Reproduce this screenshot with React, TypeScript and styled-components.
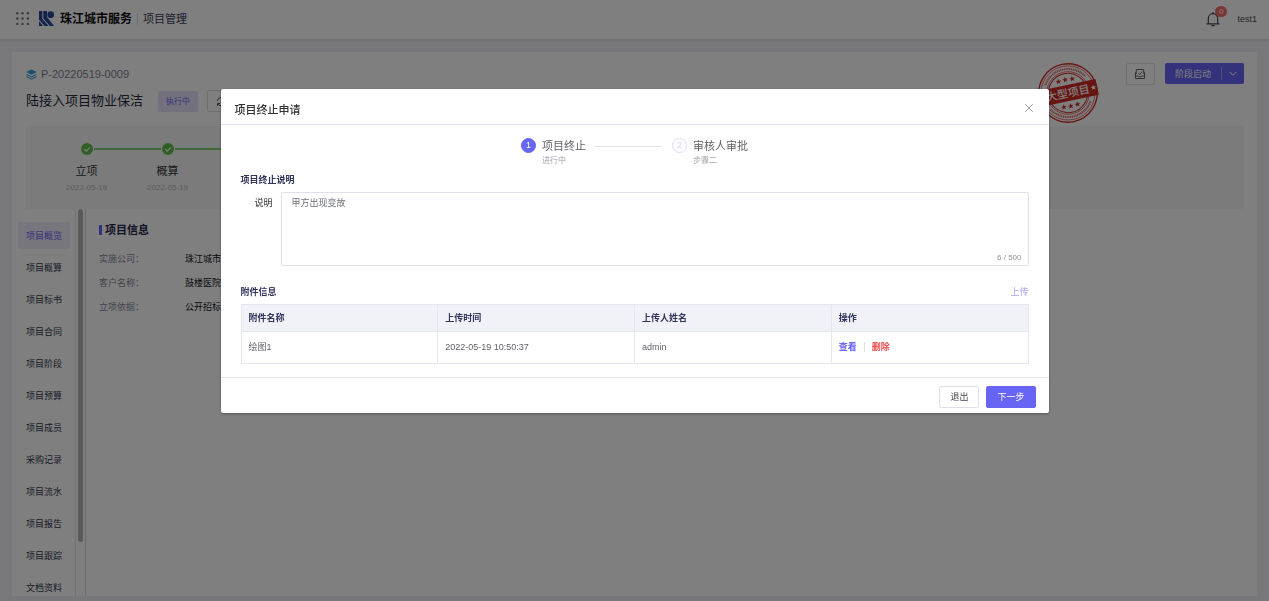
import React from "react";
import styled, { createGlobalStyle } from "styled-components";

const GlobalStyle = createGlobalStyle`
  *, *::before, *::after { box-sizing: border-box; }
  html, body, #root { height: 100%; }
  body {
    margin: 0;
    overflow: hidden;
    background: #f0f0f5;
    color: #303133;
    font-family: "Liberation Sans", "Noto Sans CJK SC", sans-serif;
    font-size: 9px;
    line-height: 14px;
  }
  button, textarea { font: inherit; }
  h1, h2, h3, p, ul, ol, dl, dd { margin: 0; padding: 0; }
  ul, ol { list-style: none; }
  a { color: inherit; text-decoration: none; }
  svg { display: block; flex: none; }
`;

const purple = "#6864f4";
const green = "#62c04c";

const Page = styled.div`
  display: flex;
  flex-direction: column;
  height: 100vh;
`;

const TopBar = styled.header`
  display: flex;
  align-items: center;
  height: 39px;
  flex: none;
  padding: 0 12px 2px 16px;
  background: #fff;
  box-shadow: 0 1px 3px rgba(0, 0, 0, 0.1);
`;

const Brand = styled.h1`
  margin-left: 6px;
  font-size: 12px;
  line-height: 18px;
  font-weight: 700;
  color: #0c0c10;
`;

const AppName = styled.span`
  margin-left: 5px;
  padding-left: 5px;
  border-left: 1px solid #dcdce4;
  font-size: 11px;
  line-height: 12px;
  color: #3c3e58;
`;

const BellButton = styled.button`
  position: relative;
  margin-left: auto;
  padding: 0;
  border: 0;
  background: none;
  color: #44464e;
`;

const Badge = styled.span`
  position: absolute;
  top: -5px;
  right: -7px;
  width: 12px;
  height: 11px;
  border-radius: 6px;
  background: #f56c6c;
  color: #fff;
  font-size: 8px;
  line-height: 11px;
  text-align: center;
`;

const UserName = styled.span`
  margin-left: 17px;
  color: #4a4c56;
`;

const Panel = styled.main`
  position: relative;
  display: flex;
  flex-direction: column;
  flex: 1;
  min-height: 0;
  margin: 13px 12px 5px;
  background: #fff;
`;

const ProjectHead = styled.div`
  display: flex;
  justify-content: space-between;
  padding: 11px 13px 0 14px;
`;

const CodeLine = styled.p`
  display: flex;
  align-items: center;
  gap: 4px;
  height: 22px;
  font-size: 11px;
  color: #7c7e94;
`;

const TitleLine = styled.div`
  display: flex;
  align-items: center;
  height: 22px;
  margin-top: 5px;
`;

const ProjectName = styled.h2`
  margin-right: 15px;
  font-size: 13px;
  line-height: 20px;
  font-weight: 400;
  color: #26283a;
`;

const Tag = styled.span`
  padding: 4px 8px 3px;
  border-radius: 2px;
  background: #e6e3fb;
  color: ${purple};
  font-size: 8px;
`;

const IconButton = styled.button`
  display: flex;
  align-items: center;
  justify-content: center;
  width: 29px;
  height: 22px;
  padding: 0;
  border: 1px solid #dcdfe6;
  border-radius: 2px;
  background: #fff;
  color: #55575f;
`;

const RefreshButton = styled(IconButton)`
  margin-left: 9px;
`;

const HeadActions = styled.div`
  display: flex;
  gap: 10px;
  align-items: flex-start;
`;

const SplitButton = styled.div`
  display: flex;
  align-items: center;
  height: 21px;
  border-radius: 2px;
  background: ${purple};
`;

const SplitPart = styled.button`
  display: flex;
  align-items: center;
  height: 13px;
  padding: 0 10px;
  border: 0;
  background: none;
  color: #fff;
`;

const SplitArrow = styled(SplitPart)`
  padding: 0 7px;
  border-left: 1px solid #9c99f8;
`;

const Stamp = styled.svg`
  position: absolute;
  top: 10px;
  right: 158px;
`;

const Stages = styled.ol`
  display: flex;
  height: 83px;
  margin: 14px 13px 0 14px;
  padding: 17px 20px 0;
  background: #f7f7f8;
`;

const StageTrack = styled.div<{ $first?: boolean }>`
  display: grid;
  grid-template-columns: 1fr 12px 1fr;
  align-items: center;
  gap: 1px;
  width: 100%;
  &::before, &::after {
    content: "";
    height: 2px;
    background: #7dcf6b;
  }
  &::before { visibility: ${(p) => (p.$first ? "hidden" : "visible")}; }
`;

const Stage = styled.li`
  display: flex;
  flex-direction: column;
  align-items: center;
  width: 81px;
  &:last-child ${StageTrack}::after { margin-right: -34px; }
`;

const StageName = styled.span`
  margin-top: 8px;
  font-size: 11px;
  line-height: 16px;
  color: #303133;
`;

const StageDate = styled.time`
  margin-top: 2px;
  font-size: 8px;
  color: #b4b6bc;
`;

const Body = styled.div`
  display: flex;
  flex: 1;
  min-height: 0;
`;

const SideNav = styled.nav`
  width: 64px;
  flex: none;
  padding: 13px 5px 0 6px;
  overflow: hidden;
  border-right: 1px solid #e2e2e6;
`;

const NavItem = styled.a<{ $active?: boolean }>`
  display: block;
  height: 27px;
  margin-bottom: 5px;
  padding: 1px 0 0 8px;
  line-height: 27px;
  background: ${(p) => (p.$active ? "#eeedfb" : "transparent")};
  color: ${(p) => (p.$active ? purple : "#34364e")};
`;

const ScrollTrack = styled.div`
  width: 10px;
  flex: none;
  padding: 0 2px;
  border-right: 1px solid #d6d6da;
`;

const ScrollThumb = styled.div`
  height: 86%;
  border-radius: 3px;
  background: #b4b4b6;
`;

const Info = styled.section`
  padding: 13px 13px 0;
`;

const InfoTitle = styled.h3`
  display: flex;
  align-items: center;
  gap: 3px;
  margin-bottom: 14px;
  font-size: 11px;
  line-height: 16px;
  color: #24274a;
  &::before {
    content: "";
    width: 3px;
    height: 10px;
    background: ${purple};
  }
`;

const InfoList = styled.dl`
  display: grid;
  grid-template-columns: 86px auto;
  row-gap: 10px;
  & dt { color: #85879a; }
  & dd { color: #101014; }
`;

const Overlay = styled.div`
  position: fixed;
  inset: 0;
  background: rgba(0, 0, 0, 0.5);
`;

const Dialog = styled.section`
  width: 828px;
  max-width: calc(100% - 32px);
  margin: 89px auto 0;
  border-radius: 2px;
  background: #fff;
  box-shadow: 0 1px 3px rgba(0, 0, 0, 0.3);
`;

const DialogHead = styled.div`
  display: flex;
  align-items: center;
  justify-content: space-between;
  height: 36px;
  padding: 6px 15px 0 14px;
  border-bottom: 1px solid #e4e5ec;
`;

const DialogTitle = styled.h2`
  font-size: 11px;
  line-height: 16px;
  font-weight: 500;
  color: #303133;
`;

const CloseButton = styled.button`
  display: flex;
  padding: 0 0 4px;
  border: 0;
  background: none;
  color: #909399;
`;

const DialogBody = styled.div`
  padding: 13px 20px;
`;

const Steps = styled.ol`
  display: flex;
  justify-content: center;
  align-items: flex-start;
`;

const Step = styled.li`
  display: flex;
  gap: 6px;
`;

const StepLine = styled.li`
  width: 66px;
  height: 1px;
  margin: 8px 11px 0 9px;
  background: #e2e3e8;
`;

const StepMark = styled.span<{ $current?: boolean }>`
  width: 15px;
  height: 15px;
  border-radius: 50%;
  border: 1px solid ${(p) => (p.$current ? purple : "#dddbf6")};
  background: ${(p) => (p.$current ? purple : "#fff")};
  color: ${(p) => (p.$current ? "#fff" : "#d3d1f2")};
  line-height: 13px;
  text-align: center;
`;

const StepName = styled.p`
  font-size: 11px;
  line-height: 17px;
  color: #606266;
`;

const StepNote = styled.p`
  font-size: 8px;
  line-height: 12px;
  color: #a0a3aa;
`;

const SectionTitle = styled.h3`
  font-size: 9px;
  line-height: 14px;
  font-weight: 700;
  color: #30335a;
`;

const StepsTitle = styled(SectionTitle)`
  margin-top: 6px;
`;

const Field = styled.div`
  display: flex;
  margin-top: 5px;
`;

const FieldLabel = styled.label`
  width: 40px;
  flex: none;
  padding: 4px 8px 0 0;
  text-align: right;
  color: #303133;
`;

const TextBox = styled.div`
  position: relative;
  flex: 1;
  height: 74px;
`;

const TextArea = styled.textarea`
  display: block;
  width: 100%;
  height: 100%;
  padding: 3px 10px;
  border: 1px solid #dfe0e8;
  border-radius: 2px;
  outline: 0;
  resize: none;
  background: #fff;
  color: #707276;
  line-height: 14px;
`;

const Counter = styled.span`
  position: absolute;
  right: 7px;
  bottom: 1px;
  font-size: 8px;
  color: #909399;
`;

const FilesHead = styled.div`
  display: flex;
  align-items: center;
  justify-content: space-between;
  margin: 19px 0 5px;
`;

const UploadButton = styled.button`
  padding: 0;
  border: 0;
  background: none;
  color: #a5a2f6;
`;

const FileTable = styled.table`
  width: 100%;
  table-layout: fixed;
  border-collapse: collapse;
  & th, & td {
    padding: 0 7px 1px;
    border: 1px solid #e6e7ee;
    text-align: left;
  }
  & th {
    height: 27px;
    background: #f1f2f8;
    color: #30335a;
    font-weight: 700;
  }
  & td {
    height: 32px;
    color: #606266;
  }
`;

const RowLink = styled.a<{ $danger?: boolean }>`
  font-weight: 700;
  color: ${(p) => (p.$danger ? "#ee4f4f" : purple)};
  & + & {
    margin-left: 7px;
    padding-left: 7px;
    border-left: 1px solid #dcdfe6;
  }
`;

const DialogFoot = styled.div`
  display: flex;
  justify-content: flex-end;
  gap: 7px;
  padding: 8px 13px 5px;
  border-top: 1px solid #e6e7ec;
`;

const Button = styled.button<{ $primary?: boolean }>`
  height: 22px;
  padding: 0 10px;
  border: 1px solid ${(p) => (p.$primary ? purple : "#dfe0ea")};
  border-radius: 2px;
  background: ${(p) => (p.$primary ? purple : "#fff")};
  color: ${(p) => (p.$primary ? "#fff" : "#484a50")};
`;

const AppsIcon = () => (
  <svg width="14" height="14" viewBox="0 0 14 14" fill="#77777c" aria-hidden="true">
    {[1.3, 6.5, 11.9].map((y) => [1.3, 6.5, 11.9].map((x) => <circle key={`${x}-${y}`} cx={x} cy={y} r="1.2" />))}
  </svg>
);

const BrandLogo = styled.svg`
  margin-left: 9px;
`;

const Logo = () => (
  <BrandLogo width="15" height="15" viewBox="0 0 45 45" fill="#2a4496" aria-hidden="true">
    <path d="M0 0h10v24l19 21H17L0 26z" />
    <path d="M0 31l12 14H0z" />
    <path d="M13 0h11v18l21 27H33L13 23z" />
    <circle cx="35" cy="11" r="10" />
  </BrandLogo>
);

const CheckIcon = () => (
  <svg width="12" height="12" viewBox="0 0 12 12" aria-hidden="true">
    <circle cx="6" cy="6" r="6" fill={green} />
    <path d="M3.3 6.1l2 2 3.4-3.7" fill="none" stroke="#fff" strokeWidth="1.2" />
  </svg>
);

const Star = ({ x, y, s }: { x: number; y: number; s: number }) => (
  <path
    transform={`translate(${x} ${y}) scale(${s})`}
    d="M0-5L1.3-1.6 4.8-1.5 2 .7 3 4 0 1.9-3 4-2 .7-4.8-1.5-1.3-1.6z"
  />
);

const stages = [
  { name: "立项", date: "2022-05-19" },
  { name: "概算", date: "2022-05-19" },
];

const navItems = [
  "项目概览", "项目概算", "项目标书", "项目合同", "项目阶段", "项目预算",
  "项目成员", "采购记录", "项目流水", "项目报告", "项目跟踪", "文档资料",
];

const facts = [
  ["实施公司", "珠江城市"],
  ["客户名称", "鼓楼医院"],
  ["立项依据", "公开招标"],
];

export default function App() {
  const [note, setNote] = React.useState("甲方出现变故");
  return (
    <>
      <GlobalStyle />
      <Page>
        <TopBar>
          <AppsIcon />
          <Logo />
          <Brand>珠江城市服务</Brand>
          <AppName>项目管理</AppName>
          <BellButton aria-label="通知">
            <svg width="14" height="16" viewBox="0 0 14 16" fill="none" stroke="currentColor" strokeWidth="1.2">
              <path d="M.5 12.8h13M2.3 12.8V7.4a4.7 4.7 0 0 1 9.4 0v5.4M7 2.7V1M5.3 14.7h3.4" />
            </svg>
            <Badge>0</Badge>
          </BellButton>
          <UserName>test1</UserName>
        </TopBar>

        <Panel>
          <ProjectHead>
            <div>
              <CodeLine>
                <svg width="11" height="11" viewBox="0 0 11 11" aria-hidden="true">
                  <path d="M5.5.4l5.3 2.6-5.3 2.8L.2 3z" fill="#36a3d9" />
                  <path d="M.5 5.4l5 2.5 5-2.5M.5 7.7l5 2.5 5-2.5" fill="none" stroke="#36a3d9" strokeWidth="1.1" />
                </svg>
                P-20220519-0009
              </CodeLine>
              <TitleLine>
                <ProjectName>陆接入项目物业保洁</ProjectName>
                <Tag>执行中</Tag>
                <RefreshButton aria-label="刷新">
                  <svg width="11" height="11" viewBox="0 0 11 11" fill="none" stroke="currentColor">
                    <path d="M1.4 4.8a4.2 4.2 0 0 1 7.7-1.5M9.5 1v2.5H7M9.6 6.2a4.2 4.2 0 0 1-7.7 1.5M1.5 10V7.5H4" />
                  </svg>
                </RefreshButton>
              </TitleLine>
            </div>
            <HeadActions>
              <IconButton aria-label="归档">
                <svg width="10" height="10" viewBox="0 0 10 10" fill="none" stroke="currentColor" strokeWidth=".9">
                  <path d="M1.3 3.8V.5h7.4v3.3M.5 3.4L2 4.6M9.5 3.4L8 4.6M.5 3.4v6.1h9V3.4M.5 7h2.6l.9.9h2l.9-.9h2.6M3.2 3.9l1.5 1.6 2.6-2.9" />
                </svg>
              </IconButton>
              <SplitButton>
                <SplitPart>阶段启动</SplitPart>
                <SplitArrow aria-label="更多">
                  <svg width="8" height="6" viewBox="0 0 8 6" fill="none" stroke="currentColor">
                    <path d="M.8 1L4 4.3 7.2 1" />
                  </svg>
                </SplitArrow>
              </SplitButton>
            </HeadActions>
          </ProjectHead>

          <Stages>
            {stages.map((s, i) => (
              <Stage key={s.name}>
                <StageTrack $first={i === 0}>
                  <CheckIcon />
                </StageTrack>
                <StageName>{s.name}</StageName>
                <StageDate>{s.date}</StageDate>
              </Stage>
            ))}
          </Stages>

          <Body>
            <SideNav>
              {navItems.map((n, i) => (
                <NavItem key={n} href="#" $active={i === 0}>
                  {n}
                </NavItem>
              ))}
            </SideNav>
            <ScrollTrack>
              <ScrollThumb />
            </ScrollTrack>
            <Info>
              <InfoTitle>项目信息</InfoTitle>
              <InfoList>
                {facts.map(([k, v]) => (
                  <React.Fragment key={k}>
                    <dt>{k}：</dt>
                    <dd>{v}</dd>
                  </React.Fragment>
                ))}
              </InfoList>
            </Info>
          </Body>

          <Stamp width="62" height="62" viewBox="-31 -31 62 62" role="img" aria-label="大型项目">
            <g transform="rotate(-12)" fill="#cf2a24">
              <g fill="none" stroke="#cf2a24">
                <circle r="29.2" strokeWidth="1.4" />
                <circle r="27" strokeWidth=".6" />
                <path d="M-20.5-12.5A24 24 0 0 1 20.5-12.5M-20.5 12.5A24 24 0 0 0 20.5 12.5" strokeWidth="2" strokeDasharray="1.2 .6" opacity=".7" />
                <circle r="21.3" strokeWidth=".6" />
                <circle r="19.6" strokeWidth="1" />
              </g>
              <path d="M-29.8-8h59.6v16h-59.6z" />
              <Star x={-7} y={-13} s={0.6} />
              <Star x={0} y={-13.5} s={0.6} />
              <Star x={7} y={-13} s={0.6} />
              <Star x={-7} y={13} s={0.6} />
              <Star x={0} y={13.5} s={0.6} />
              <Star x={7} y={13} s={0.6} />
              <g fill="#fff">
                <Star x={-26} y={0} s={0.6} />
                <Star x={26} y={0} s={0.6} />
                <text y="4" textAnchor="middle" fontSize="11" fontWeight="500" fontFamily='"Liberation Serif", "Noto Sans CJK SC", serif'>
                  大型项目
                </text>
              </g>
            </g>
          </Stamp>
        </Panel>
      </Page>

      <Overlay>
        <Dialog role="dialog" aria-modal="true" aria-labelledby="dialog-title">
          <DialogHead>
            <DialogTitle id="dialog-title">项目终止申请</DialogTitle>
            <CloseButton aria-label="关闭">
              <svg width="10" height="10" viewBox="0 0 10 10" fill="none" stroke="currentColor" strokeWidth=".9">
                <path d="M1.2 1.2l7.6 7.6M8.8 1.2L1.2 8.8" />
              </svg>
            </CloseButton>
          </DialogHead>

          <DialogBody>
            <Steps>
              <Step>
                <StepMark $current>1</StepMark>
                <div>
                  <StepName>项目终止</StepName>
                  <StepNote>进行中</StepNote>
                </div>
              </Step>
              <StepLine aria-hidden="true" />
              <Step>
                <StepMark>2</StepMark>
                <div>
                  <StepName>审核人审批</StepName>
                  <StepNote>步骤二</StepNote>
                </div>
              </Step>
            </Steps>

            <StepsTitle>项目终止说明</StepsTitle>
            <Field>
              <FieldLabel htmlFor="note">说明</FieldLabel>
              <TextBox>
                <TextArea id="note" maxLength={500} value={note} onChange={(e) => setNote(e.target.value)} />
                <Counter>{note.length} / 500</Counter>
              </TextBox>
            </Field>

            <FilesHead>
              <SectionTitle>附件信息</SectionTitle>
              <UploadButton>上传</UploadButton>
            </FilesHead>
            <FileTable>
              <thead>
                <tr>
                  <th>附件名称</th>
                  <th>上传时间</th>
                  <th>上传人姓名</th>
                  <th>操作</th>
                </tr>
              </thead>
              <tbody>
                <tr>
                  <td>绘图1</td>
                  <td>2022-05-19 10:50:37</td>
                  <td>admin</td>
                  <td>
                    <RowLink href="#">查看</RowLink>
                    <RowLink href="#" $danger>删除</RowLink>
                  </td>
                </tr>
              </tbody>
            </FileTable>
          </DialogBody>

          <DialogFoot>
            <Button>退出</Button>
            <Button $primary>下一步</Button>
          </DialogFoot>
        </Dialog>
      </Overlay>
    </>
  );
}
